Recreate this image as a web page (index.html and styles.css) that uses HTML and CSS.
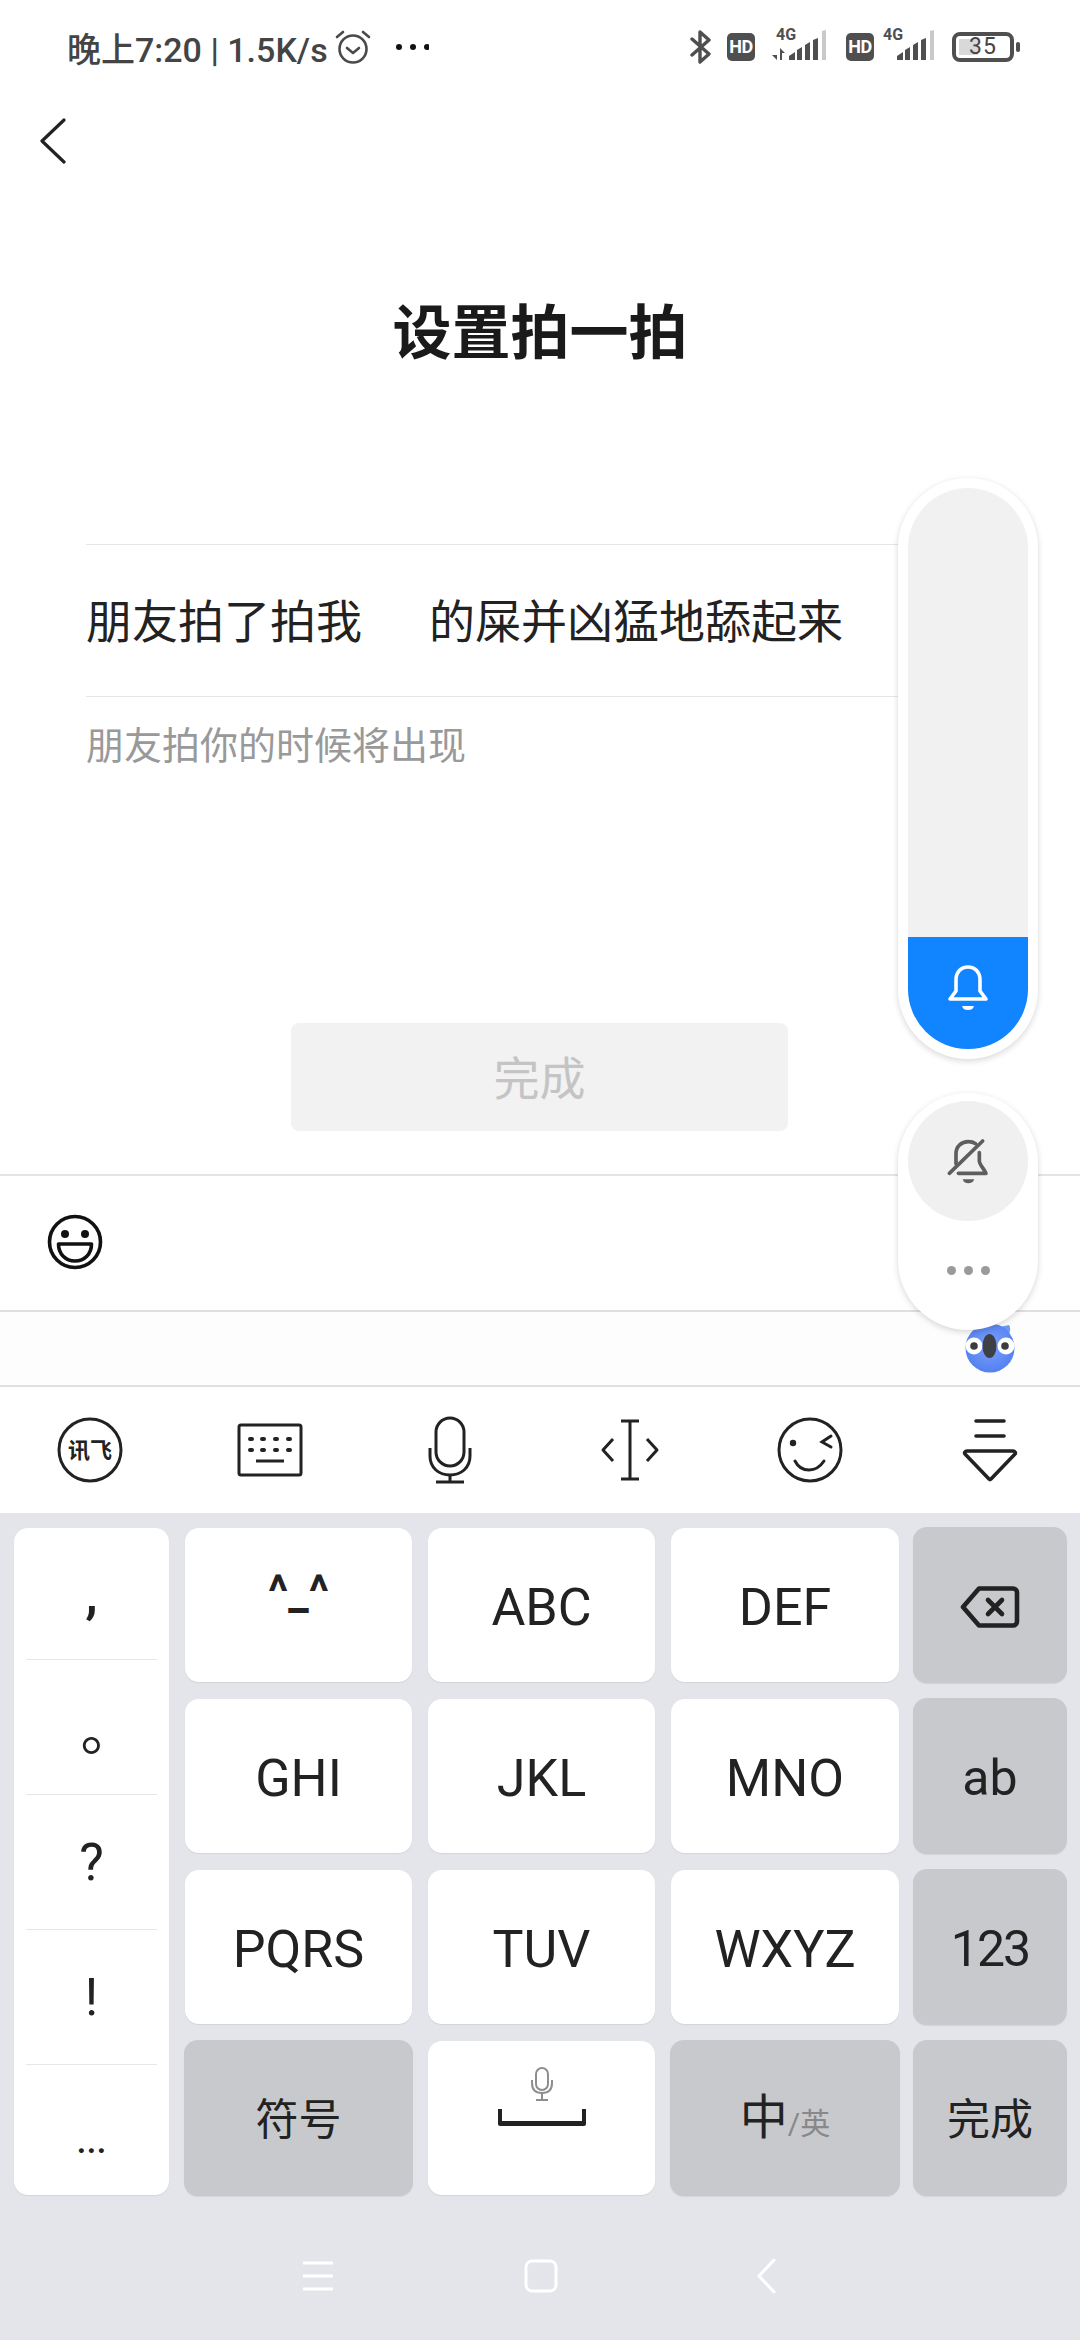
FILE: index.html
```html
<!DOCTYPE html>
<html lang="zh-CN">
<head>
    <meta charset="UTF-8">
    <meta name="viewport" content="width=device-width, initial-scale=1.0">
    <title>设置拍一拍</title>
    <link rel="stylesheet" href="styles.css">
</head>
<body>
<div class="phone">
    <div class="status">
        <div class="status-left">
            <span class="status-text">晚上7:20 | 1.5K/s</span>
            <svg class="alarm" width="36" height="36" viewBox="0 0 36 36" fill="none" stroke="#4a4a4a" stroke-width="2.6" stroke-linecap="round" stroke-linejoin="round">
                <circle cx="18" cy="20" r="13.5"/>
                <path d="M12 19l6 5 6-5"/>
                <path d="M2 8l6-5M34 8l-6-5"/>
            </svg>
            <svg class="status-dots" width="34" height="8" viewBox="0 0 34 8" fill="#111">
                <circle cx="4" cy="4" r="3"/><circle cx="18" cy="4" r="3"/><circle cx="32" cy="4" r="3"/>
            </svg>
        </div>
        <div class="status-right">
            <svg class="bt" width="22" height="36" viewBox="0 0 22 36" fill="none" stroke="#4f4f4f" stroke-width="3.4" stroke-linejoin="round" stroke-linecap="round">
                <path d="M2 10l17 15-9 8V3l9 8L2 26"/>
            </svg>
            <span class="hd">HD</span>
            <div class="signal signal-one">
                <span class="net">4G</span>
                <svg width="58" height="30" viewBox="0 0 58 30" fill="#4f4f4f">
                    <path d="M5 18v12L0 25h5zM8 18l5 5H10v7H8z"/>
                    <path d="M17 30v-4l6-4v8zM25 30v-10l5-3v13zM33 30V15l5-3v18zM41 30V10l5-2v22z"/>
                    <path d="M50 30V1l4-1v30z" fill="#c9c9c9"/>
                </svg>
            </div>
            <span class="hd hd-two">HD</span>
            <div class="signal signal-two">
                <span class="net">4G</span>
                <svg width="54" height="30" viewBox="0 0 54 30" fill="#4f4f4f">
                    <path d="M14 30v-4l6-4v8zM22 30v-10l5-3v13zM30 30V15l5-3v18zM38 30V10l5-2v22z"/>
                    <path d="M47 30V1l4-1v30z" fill="#c9c9c9"/>
                </svg>
            </div>
            <div class="battery">
                <div class="battery-body">
                    <span class="battery-fill"></span>
                    <span class="battery-num">35</span>
                </div>
                <span class="battery-nub"></span>
            </div>
        </div>
    </div>

    <div class="nav">
        <svg width="26" height="46" viewBox="0 0 26 46" fill="none" stroke="#222" stroke-width="3.2" stroke-linecap="round" stroke-linejoin="round">
            <path d="M24 2L2 23l22 21"/>
        </svg>
    </div>

    <h1 class="title">设置拍一拍</h1>

    <div class="form">
        <div class="form-row">
            <span>朋友拍了拍我</span>
            <span class="form-input">的屎并凶猛地舔起来</span>
        </div>
        <div class="hint">朋友拍你的时候将出现</div>
    </div>

    <div class="done-wrap">
        <div class="done-btn">完成</div>
    </div>

    <div class="emoji-bar">
        <svg width="56" height="56" viewBox="0 0 56 56" fill="none" stroke="#111" stroke-width="3.6" stroke-linejoin="round">
            <circle cx="28" cy="28" r="25.5"/>
            <circle cx="18" cy="20" r="4" fill="#111" stroke="none"/>
            <circle cx="38" cy="20" r="4" fill="#111" stroke="none"/>
            <path d="M11.500 30h33c0 10-7 17-16.500 17S11.500 40 11.500 30z"/>
        </svg>
    </div>

    <div class="suggest-bar"></div>

    <div class="toolbar">
        <div class="tool">
            <svg width="66" height="66" viewBox="0 0 66 66" fill="none" stroke="#222" stroke-width="3">
                <circle cx="33" cy="33" r="31"/>
                <text class="tool-logo" x="33" y="41">讯飞</text>
            </svg>
        </div>
        <div class="tool">
            <svg width="66" height="54" viewBox="0 0 66 54" fill="none" stroke="#222" stroke-width="3">
                <rect x="2" y="2" width="62" height="50" rx="2"/>
                <path d="M13 16h2M25 16h2M38 16h2M51 16h2M13 27h2M25 27h2M38 27h2M51 27h2" stroke-width="4" stroke-linecap="round"/>
                <path d="M19 38h28"/>
            </svg>
        </div>
        <div class="tool">
            <svg width="44" height="68" viewBox="0 0 44 68" fill="none" stroke="#222" stroke-width="3">
                <rect x="8" y="2" width="28" height="48" rx="14"/>
                <path d="M2 32v8c0 12 9 19 20 19s20-7 20-19v-8"/>
                <path d="M22 59v7M8 66h28"/>
            </svg>
        </div>
        <div class="tool">
            <svg width="60" height="62" viewBox="0 0 60 62" fill="none" stroke="#222" stroke-width="3" stroke-linejoin="round">
                <path d="M30 2v58M21 2h18M21 60h18"/>
                <path d="M13 20L3 31l10 11M47 20l10 11-10 11"/>
            </svg>
        </div>
        <div class="tool">
            <svg width="66" height="66" viewBox="0 0 66 66" fill="none" stroke="#222" stroke-width="3" stroke-linecap="round">
                <circle cx="33" cy="33" r="31"/>
                <circle cx="16" cy="26" r="3.200" fill="#222" stroke="none"/>
                <path d="M54 19l-9 6 9 5"/>
                <path d="M18 44c3 6 8 9 14 9s11-3 15-9"/>
            </svg>
        </div>
        <div class="tool">
            <svg width="56" height="64" viewBox="0 0 56 64" fill="none" stroke="#222" stroke-width="3.6" stroke-linecap="round" stroke-linejoin="round">
                <path d="M14 3h28M14 18h28"/>
                <path d="M5 33h46c2 0 3 2 2 3L29 61c-1 1-1 1-2 0L3 36c-1-1 0-3 2-3z"/>
            </svg>
        </div>
    </div>

    <div class="keyboard">
        <div class="keys">
            <div class="key-col">
                <div class="col-cell col-comma"><span>,</span></div>
                <div class="col-cell col-period"><span>。</span></div>
                <div class="col-cell col-ask"><span>?</span></div>
                <div class="col-cell col-bang"><span>!</span></div>
                <div class="col-cell col-more"><span>...</span></div>
            </div>
            <div class="key key-face">^_^</div>
            <div class="key">ABC</div>
            <div class="key">DEF</div>
            <div class="key key-fn key-side">
                <svg width="60" height="42" viewBox="0 0 60 42" fill="none" stroke="#222" stroke-width="4.6" stroke-linejoin="round" stroke-linecap="round">
                    <path d="M19 2.500h34a4 4 0 0 1 4 4v29a4 4 0 0 1-4 4H19L3 21z"/>
                    <path d="M28 14l14 14M42 14L28 28"/>
                </svg>
            </div>
            <div class="key">GHI</div>
            <div class="key">JKL</div>
            <div class="key">MNO</div>
            <div class="key key-fn key-side">ab</div>
            <div class="key">PQRS</div>
            <div class="key">TUV</div>
            <div class="key">WXYZ</div>
            <div class="key key-fn key-side key-num">123</div>
            <div class="key key-fn key-cjk">符号</div>
            <div class="key key-space">
                <svg class="space-mic" width="24" height="34" viewBox="0 0 24 34" fill="none" stroke="#8e8e8e" stroke-width="2">
                    <rect x="6" y="1" width="12" height="22" rx="6"/>
                    <path d="M2 13v3c0 7 4 10 10 10s10-3 10-10v-3"/>
                    <path d="M12 26v7M6 33h12"/>
                </svg>
                <svg width="88" height="18" viewBox="0 0 88 18" fill="#222">
                    <path d="M0 0h4v12h80V0h4v15c0 1-1 2-2 2H2c-1 0-2-1-2-2z"/>
                </svg>
            </div>
            <div class="key key-fn key-cjk key-lang">中<small>/英</small></div>
            <div class="key key-fn key-side key-cjk">完成</div>
        </div>
        <div class="navbar">
            <svg width="32" height="30" viewBox="0 0 32 30" fill="none" stroke="#fff" stroke-width="3">
                <path d="M1 2h30M1 15h30M1 28h30"/>
            </svg>
            <svg width="34" height="34" viewBox="0 0 34 34" fill="none" stroke="#fff" stroke-width="3">
                <rect x="2" y="2" width="30" height="30" rx="6"/>
            </svg>
            <svg width="20" height="36" viewBox="0 0 20 36" fill="none" stroke="#fff" stroke-width="3" stroke-linecap="round" stroke-linejoin="round">
                <path d="M18 2L3 18l15 16"/>
            </svg>
        </div>
    </div>

    <!-- floating volume panel sits over the page -->
    <div class="volume">
        <div class="volume-track">
            <div class="volume-fill">
                <svg width="42" height="46" viewBox="0 0 42 46" fill="none" stroke="#fff" stroke-width="3.6" stroke-linejoin="round" stroke-linecap="round">
                    <path d="M3 34l6-8V15C9 7 14 2 21 2s12 5 12 13v11l6 8z"/>
                    <path d="M15 41h12c-1 3-3 4-6 4s-5-1-6-4z" fill="#fff" stroke="none"/>
                </svg>
            </div>
        </div>
    </div>
    <svg class="koala" width="50" height="50" viewBox="0 0 50 50">
        <defs>
            <radialGradient id="koalaBlue" cx="50%" cy="45%" r="60%">
                <stop offset="0%" stop-color="#7fa2fb"/>
                <stop offset="100%" stop-color="#4f7df0"/>
            </radialGradient>
        </defs>
        <path d="M44 2c2 3 1 7 0 9l-14-6z" fill="#6f95f5"/>
        <circle cx="25" cy="25" r="24.500" fill="url(#koalaBlue)"/>
        <circle cx="9" cy="23" r="8.500" fill="#fff"/>
        <circle cx="41" cy="23" r="8.500" fill="#fff"/>
        <circle cx="9" cy="23" r="3.800" fill="#3c3c40"/>
        <circle cx="40" cy="23" r="3.800" fill="#3c3c40"/>
        <ellipse cx="24.500" cy="23" rx="7" ry="12" fill="#3d4045"/>
    </svg>
    <div class="volume-more">
        <div class="mute">
            <svg class="mute-bell" width="80" height="80" viewBox="0 0 240 240" fill="none" stroke="#5e5e5e" stroke-width="11" stroke-linejoin="round" stroke-linecap="round">
                <path d="M75 128V98C75 75 92 62 112 62c8 0 16 2 22 6"/>
                <path d="M145 95v25c0 10 15 25 20 37H82"/>
                <path d="M55 157L155 60"/>
                <path d="M95 175h35c-3 9-12 12-18 12-7 0-14-3-17-12z" fill="#5e5e5e" stroke="none"/>
            </svg>
        </div>
        <div class="more-dots"><i></i><i></i><i></i></div>
    </div>
</div>
</body>
</html>
```

FILE: styles.css
```css
* {
    box-sizing: border-box;
}
body {
    margin: 0;
    background: #fff;
    font-family: "Roboto", "Noto Sans CJK SC", sans-serif;
    color: #222;
}
.phone {
    position: relative;
    width: 1080px;
    height: 2340px;
    overflow: hidden;
    display: flex;
    flex-direction: column;
    background: #fff;
}

/* status bar */
.status {
    height: 94px;
    padding: 0 60px 0 67px;
    display: flex;
    justify-content: space-between;
    align-items: center;
}
.status-left, .status-right {
    display: flex;
    align-items: center;
}
.status-text {
    font-size: 34px;
    font-weight: 500;
    color: #444;
    white-space: nowrap;
}
.alarm {
    margin-left: 7px;
}
.status-dots {
    margin-left: 24px;
}
.hd {
    margin-left: 15px;
    width: 28px;
    height: 28px;
    border-radius: 5px;
    background: #4f4f4f;
    color: #fff;
    font-size: 18px;
    font-weight: 700;
    line-height: 28px;
    text-align: center;
    letter-spacing: -0.5px;
}
.hd-two {
    margin-left: 16px;
}
.signal {
    position: relative;
}
.signal-one {
    margin-left: 17px;
}
.signal-two {
    margin-left: 9px;
}
.net {
    position: absolute;
    top: -4px;
    left: 4px;
    font-size: 16px;
    line-height: 18px;
    font-weight: 700;
    color: #4f4f4f;
}
.signal-two .net {
    left: 0;
}
.battery {
    margin-left: 15px;
    display: flex;
    align-items: center;
}
.battery-body {
    position: relative;
    width: 62px;
    height: 30px;
    border: 4px solid #4f4f4f;
    border-radius: 8px;
    display: flex;
    justify-content: center;
    align-items: center;
}
.battery-fill {
    position: absolute;
    left: 3px;
    top: 3px;
    bottom: 3px;
    width: 19px;
    background: #d9d9d9;
}
.battery-num {
    position: relative;
    font-size: 23px;
    line-height: 22px;
    letter-spacing: 1px;
    color: #444;
}
.battery-nub {
    margin-left: 2px;
    width: 4px;
    height: 10px;
    border-radius: 2px;
    background: #4f4f4f;
}

/* page */
.nav {
    height: 80px;
    padding: 24px 0 0 40px;
}
.title {
    margin: 0;
    height: 370px;
    padding-top: 117px;
    font-size: 59px;
    line-height: 86px;
    font-weight: 700;
    text-align: center;
    color: #1a1a1a;
}
.form {
    margin: 0 86px;
    height: 479px;
    border-top: 1px solid #e5e5e5;
}
.form-row {
    height: 152px;
    border-bottom: 1px solid #e5e5e5;
    padding-bottom: 6px;
    display: flex;
    align-items: center;
    font-size: 46px;
    color: #222;
}
.form-input {
    margin-left: 67px;
}
.hint {
    margin-top: 24px;
    font-size: 38px;
    line-height: 50px;
    color: #999;
}
.done-wrap {
    height: 151px;
}
.done-btn {
    margin-left: 291px;
    width: 497px;
    height: 108px;
    border-radius: 8px;
    background: #f2f2f2;
    color: #c4c4c4;
    font-size: 46px;
    line-height: 113px;
    text-align: center;
}
.emoji-bar {
    height: 136px;
    border-top: 2px solid #e4e4e4;
    padding: 38px 0 0 47px;
}
.suggest-bar {
    height: 75px;
    border-top: 2px solid #dfdfdf;
    background: #fdfdfd;
}
.toolbar {
    height: 128px;
    border-top: 2px solid #dfdfdf;
    display: flex;
}
.tool {
    width: 180px;
    display: flex;
    justify-content: center;
    align-items: center;
}
.tool-logo {
    font-family: "Noto Sans CJK SC", sans-serif;
    font-size: 22px;
    font-weight: 700;
    fill: #222;
    stroke: none;
    text-anchor: middle;
}

/* keyboard */
.keyboard {
    flex: 1;
    background: #e3e5ea;
    padding: 15px 13px 0 14px;
    display: flex;
    flex-direction: column;
}
.keys {
    display: grid;
    grid-template-columns: 155px 227px 227px 228px 152px;
    grid-template-rows: repeat(4, 154px);
    column-gap: 16px;
    row-gap: 17px;
}
.key {
    background: #fff;
    border-radius: 14px;
    box-shadow: 0 1px 1px #d2d4d9;
    display: flex;
    justify-content: center;
    align-items: center;
    font-size: 52px;
    color: #222;
    padding-top: 4px;
}
.key-fn {
    background: #c8c9cd;
    margin: -1px;
    font-size: 50px;
}
.key-side {
    margin-left: -2px;
    margin-right: 0;
}
.key-num {
    letter-spacing: -2px;
}
.key-cjk {
    font-size: 43px;
    padding-top: 0;
    padding-bottom: 4px;
}
.key-face {
    font-size: 46px;
    font-weight: 700;
    padding-top: 0;
    padding-bottom: 27px;
}
.key-lang {
    font-size: 48px;
    align-items: baseline;
    padding-top: 38px;
    padding-bottom: 0;
}
.key-lang small {
    font-size: 30px;
    color: #888;
}
.key-space {
    flex-direction: column;
    padding-top: 0;
    padding-bottom: 42px;
}
.space-mic {
    margin-bottom: 8px;
}
.key-col {
    grid-row: 1 / span 4;
    background: #fff;
    border-radius: 14px;
    box-shadow: 0 1px 1px #d2d4d9;
    padding: 0 12px;
    display: flex;
    flex-direction: column;
}
.col-cell {
    height: 135px;
    border-bottom: 1px solid #e6e6e6;
    display: flex;
    justify-content: center;
    align-items: center;
    font-size: 52px;
    color: #222;
}
.col-comma {
    height: 132px;
    font-size: 56px;
    font-weight: 500;
    padding-bottom: 2px;
}
.col-period {
    font-size: 56px;
    font-family: "Noto Sans CJK SC", sans-serif;
    padding: 0 0 4px 34px;
}
.col-more {
    flex: 1;
    border-bottom: 0;
    font-size: 36px;
    font-weight: 500;
    padding-top: 22px;
}
.navbar {
    margin-top: 63px;
    display: flex;
    align-items: center;
    padding-left: 288px;
    gap: 190px;
}
.navbar svg:last-child {
    margin-left: 8px;
}

/* floating panels */
.volume, .volume-more {
    position: absolute;
    left: 898px;
    width: 140px;
    background: #fff;
    border-radius: 70px;
    box-shadow: 0 2px 6px rgba(0, 0, 0, 0.16);
    padding: 10px;
}
.volume {
    top: 478px;
    height: 581px;
}
.volume-track {
    height: 100%;
    background: #f1f1f1;
    border-radius: 60px;
    overflow: hidden;
    display: flex;
    flex-direction: column;
    justify-content: flex-end;
}
.volume-fill {
    height: 112px;
    background: #1085ff;
    display: flex;
    justify-content: center;
    padding-top: 28px;
}
.volume-more {
    top: 1093px;
    height: 237px;
    padding-top: 8px;
}
.mute {
    width: 120px;
    height: 120px;
    border-radius: 50%;
    background: #f0f0f0;
    display: flex;
    justify-content: center;
    align-items: center;
}
.mute-bell {
    margin-left: 6px;
}
.more-dots {
    margin-top: 45px;
    display: flex;
    justify-content: center;
    gap: 8px;
}
.more-dots i {
    width: 9px;
    height: 9px;
    border-radius: 50%;
    background: #9a9a9a;
}
.koala {
    position: absolute;
    left: 965px;
    top: 1323px;
}
```
